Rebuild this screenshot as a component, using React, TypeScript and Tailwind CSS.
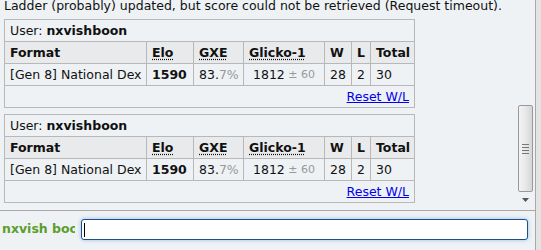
import React from "react";

function LadderBox() {
  const cell = "bg-[#eef2f5] px-[5px] h-[21px] flex items-center leading-[15px]";
  const head = "bg-[#e9eaeb] px-[5px] h-[21px] flex items-center font-bold leading-[15px]";
  const abbr = "underline decoration-dotted underline-offset-[2px]";
  return (
    <div className="grid w-[411px] grid-cols-[141px_46px_49px_80px_26px_18px_43px] gap-px border border-[#b8b8b8] bg-[#b8b8b8]">
      <div className={`${cell} col-span-7`}>
        User:&nbsp;<span className="font-bold">nxvishboon</span>
      </div>
      <div className={head}>Format</div>
      <div className={head}>
        <span className={abbr}>Elo</span>
      </div>
      <div className={head}>
        <span className={abbr}>GXE</span>
      </div>
      <div className={head}>
        <span className={abbr}>Glicko-1</span>
      </div>
      <div className={head}>W</div>
      <div className={head}>L</div>
      <div className={head}>Total</div>
      <div className={`${cell} whitespace-nowrap`}>[Gen 8] National Dex</div>
      <div className={`${cell} font-bold`}>1590</div>
      <div className={cell}>
        83.<span className="text-[#999]">7%</span>
      </div>
      <div className={`${cell} justify-center whitespace-nowrap`}>
        1812<span className="text-[11px] text-[#999]">&nbsp;± 60</span>
      </div>
      <div className={cell}>28</div>
      <div className={cell}>2</div>
      <div className={cell}>30</div>
      <div className={`${cell} col-span-7 justify-end`}>
        <a href="#" className="text-[#0000ee] underline">
          Reset W/L
        </a>
      </div>
    </div>
  );
}

export default function App() {
  return (
    <div className="flex h-[250px] w-[541px] overflow-hidden bg-[#eef2f5] font-['DejaVu_Sans',Verdana,sans-serif] text-[12.5px] text-[#111]">
      <div className="flex w-[535px] flex-col">
        <div className="flex h-[211px] border-b border-[#a9a9a9]">
          <div className="flex-1 overflow-hidden pl-[4px]">
            <div className="-mt-[2px] h-[16px] whitespace-nowrap leading-[16px]">
              Ladder (probably) updated, but score could not be retrieved (Request timeout).
            </div>
            <div className="mt-[5px]">
              <LadderBox />
            </div>
            <div className="mt-[6px]">
              <LadderBox />
            </div>
          </div>
          <div className="flex w-[18px] flex-col items-start pl-[1px]">
            <div className="mt-[105px] flex h-[87px] w-[15px] items-center justify-center rounded-[2px] border border-[#999] bg-gradient-to-r from-[#f4f4f4] via-[#e8e8e8] to-[#d6d6d6]">
              <div className="flex flex-col gap-[2px]">
                <div className="h-px w-[7px] bg-[#777]" />
                <div className="h-px w-[7px] bg-[#777]" />
                <div className="h-px w-[7px] bg-[#777]" />
                <div className="h-px w-[7px] bg-[#777]" />
              </div>
            </div>
            <div className="mt-[6px] flex w-[15px] justify-center">
              <svg width="7" height="4" viewBox="0 0 7 4">
                <polygon points="0,0 7,0 3.5,4" fill="#555" />
              </svg>
            </div>
          </div>
        </div>
        <div className="flex flex-1 items-center pb-[2px]">
          <div className="w-[75px] shrink-0 overflow-hidden whitespace-nowrap pl-[2px] font-bold text-[#5a9e2e]">
            nxvish boon
          </div>
          <div className="relative ml-[6px] h-[21px] w-[447px]">
            <input
              className="h-full w-full rounded-[3px] border border-[#1d4f8f] bg-white px-[3px] shadow-[0_0_4px_#9cc0e6] outline-none"
              defaultValue=""
            />
            <span className="absolute left-[3px] top-[4px] h-[14px] w-px bg-black" />
          </div>
        </div>
      </div>
      <div className="w-[6px] border-l border-[#a8a8a8] bg-[#e4e4e4]" />
    </div>
  );
}
